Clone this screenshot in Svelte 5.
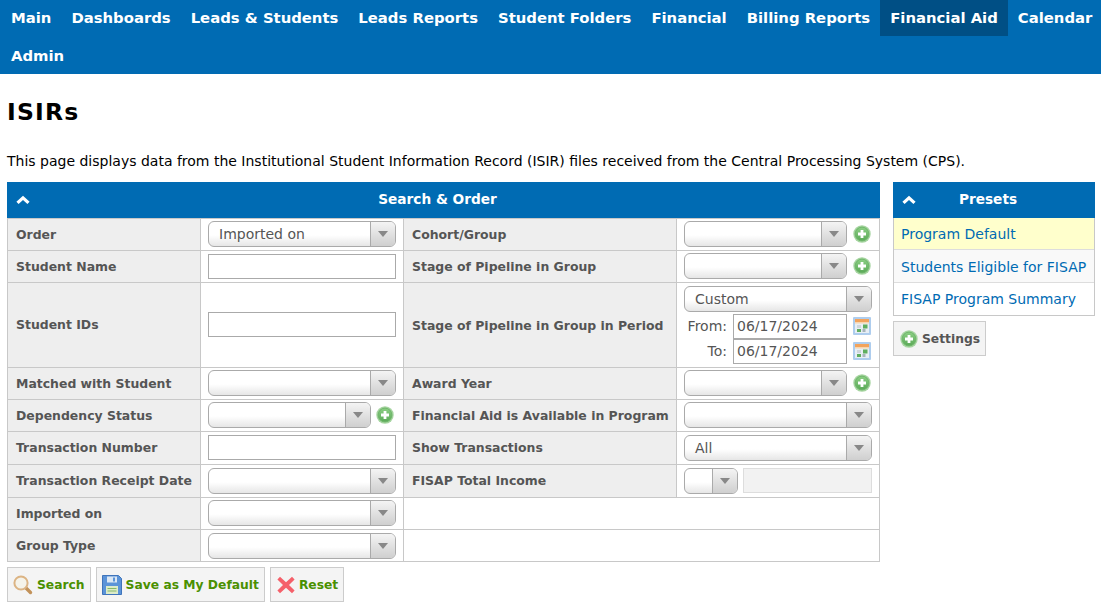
<script>
  const navRows = [
    ['Main','Dashboards','Leads & Students','Leads Reports','Student Folders','Financial','Billing Reports','Financial Aid','Calendar'],
    ['Admin']
  ];
  const presets = ['Program Default','Students Eligible for FISAP','FISAP Program Summary'];
</script>

{#snippet plus()}
  <svg class="plus" viewBox="0 0 18 18" width="18" height="18" aria-hidden="true">
    <defs><linearGradient id="pg" x1="0" y1="0" x2="0" y2="1"><stop offset="0" stop-color="#8ccf84"/><stop offset="1" stop-color="#5aa957"/></linearGradient></defs>
    <circle cx="9" cy="9" r="8.7" fill="#a5d49f"/>
    <circle cx="9" cy="9" r="6.9" fill="url(#pg)" stroke="#6fb66b" stroke-width="1"/>
    <path d="M7.6 5h2.8v2.6H13v2.8h-2.6V13H7.6v-2.6H5V7.6h2.6z" fill="#fff"/>
  </svg>
{/snippet}

{#snippet select(value, cls)}
  <div class="select {cls}"><span class="val">{value}</span><span class="arrow"><i></i></span></div>
{/snippet}

{#snippet selectPlus()}
  <div class="withplus">{@render select('', 'short')}{@render plus()}</div>
{/snippet}

{#snippet cal()}
  <svg class="cal" viewBox="0 0 18 18" width="18" height="18" aria-hidden="true">
    <rect width="18" height="18" rx="1" fill="#aecdee"/>
    <rect x="2" y="2" width="14" height="14" fill="#e8eff5"/>
    <rect x="2" y="2" width="14" height="3" fill="#f2a35c"/>
    <rect x="2" y="5" width="14" height="1.5" fill="#f7d6b0"/>
    <rect x="4" y="8" width="4" height="3" fill="#cfd6dc"/>
    <rect x="10" y="7.5" width="4.5" height="4" fill="#5fae5f"/>
    <rect x="4" y="12" width="4" height="3" fill="#5fae5f"/>
    <rect x="9.5" y="12" width="3" height="3" fill="#a8b4bc"/>
  </svg>
{/snippet}

{#snippet chevron()}
  <svg class="chev" viewBox="0 0 14 10" width="14" height="10" aria-hidden="true"><path d="M7 .8 13.6 6.8 11.4 9 7 5 2.6 9 .4 6.8z" fill="#fff"/></svg>
{/snippet}

<nav class="nav">
  {#each navRows as row}
    <div class="navrow">
      {#each row as item}
        <a class="navitem" class:active={item === 'Financial Aid'} href="#top">{item}</a>
      {/each}
    </div>
  {/each}
</nav>

<main class="page">
  <h1>ISIRs</h1>
  <p class="intro">This page displays data from the Institutional Student Information Record (ISIR) files received from the Central Processing System (CPS).</p>

  <div class="cols">
    <section class="left">
      <header class="bar">{@render chevron()}<span>Search &amp; Order</span></header>
      <table>
        <colgroup><col class="c1"/><col class="c2"/><col class="c3"/><col class="c4"/></colgroup>
        <tbody>
          <tr><th>Order</th><td>{@render select('Imported on', '')}</td><th>Cohort/Group</th><td>{@render selectPlus()}</td></tr>
          <tr><th>Student Name</th><td><div class="input"></div></td><th>Stage of Pipeline in Group</th><td>{@render selectPlus()}</td></tr>
          <tr class="tall">
            <th>Student IDs</th><td><div class="input"></div></td>
            <th>Stage of Pipeline in Group in Period</th>
            <td>
              {@render select('Custom', '')}
              <div class="date first"><label for="d1">From:</label><div id="d1" class="input dateinput">06/17/2024</div>{@render cal()}</div>
              <div class="date"><label for="d2">To:</label><div id="d2" class="input dateinput">06/17/2024</div>{@render cal()}</div>
            </td>
          </tr>
          <tr><th>Matched with Student</th><td>{@render select('', '')}</td><th>Award Year</th><td>{@render selectPlus()}</td></tr>
          <tr><th>Dependency Status</th><td><div class="withplus tight">{@render select('', 'short')}{@render plus()}</div></td><th>Financial Aid is Available in Program</th><td>{@render select('', '')}</td></tr>
          <tr class="mid"><th>Transaction Number</th><td class="inputcell"><div class="input"></div></td><th>Show Transactions</th><td>{@render select('All', '')}</td></tr>
          <tr class="mid"><th>Transaction Receipt Date</th><td>{@render select('', '')}</td><th>FISAP Total Income</th><td><div class="income">{@render select('', 'tiny')}<div class="disabled"></div></div></td></tr>
          <tr><th>Imported on</th><td>{@render select('', '')}</td><td class="blank" colspan="2"></td></tr>
          <tr class="last"><th>Group Type</th><td>{@render select('', '')}</td><td class="blank" colspan="2"></td></tr>
        </tbody>
      </table>
      <div class="actions">
        <button type="button">
          <svg viewBox="0 0 20 20" width="20" height="20" aria-hidden="true"><path d="M12.5 12.5 17.5 17.5" stroke="#c2925a" stroke-width="3.4" stroke-linecap="round"/><circle cx="8" cy="8" r="6.6" fill="#f5f3ea" stroke="#dcb484" stroke-width="2"/></svg>
          Search
        </button>
        <button type="button">
          <svg viewBox="0 0 20 20" width="20" height="20" aria-hidden="true"><path d="M.5.5h16l3 3v16H.5z" fill="#5b93d8" stroke="#3f74bb"/><rect x="5" y="1.5" width="10" height="6" fill="#dbe7f4"/><rect x="11" y="2.5" width="2" height="4" fill="#5b93d8"/><rect x="4" y="11" width="12" height="8" fill="#dcebc8"/><path d="M5.5 13.5h9M5.5 16h9" stroke="#86b868" stroke-width="1"/></svg>
          Save as My Default
        </button>
        <button type="button" class="reset">
          <svg viewBox="0 0 18 18" width="18" height="18" aria-hidden="true"><path d="M3 .8 9 6.3 15 .8 17.6 3.4 12 9l5.6 5.6-2.6 2.6L9 11.7l-6 5.5L.4 14.6 6 9 .4 3.4z" fill="#f5606a"/></svg>
          Reset
        </button>
      </div>
    </section>

    <aside class="right">
      <header class="bar">{@render chevron()}<span>Presets</span></header>
      <ul>
        {#each presets as p, i}
          <li class:sel={i === 0} class:alt={i === 1}><a href="#top">{p}</a></li>
        {/each}
      </ul>
      <button type="button" class="settings">{@render plus()}Settings</button>
    </aside>
  </div>
</main>

<style>
  :global(body) { margin: 0; background: #fff; font-family: "DejaVu Sans", Verdana, sans-serif; }
  .nav { background: #006bb3; padding: 0 1px; height: 74px; box-sizing: border-box; overflow: hidden; }
  .navrow { display: flex; height: 38px; white-space: nowrap; }
  .navitem { color: #fff; font-weight: 700; font-size: 14.83px; line-height: 36px; height: 36px; padding: 0 10px; text-decoration: none; flex: none; }
  .navitem.active { background: #004f85; }
  .page { padding: 0 7px; }
  h1 { margin: 0; padding-top: 24px; font-size: 23.5px; letter-spacing: 1.2px; line-height: 28px; font-weight: 700; color: #000; }
  .intro { margin: 0; padding-top: 26px; font-size: 14px; line-height: 18px; height: 30px; color: #000; white-space: nowrap; }
  .cols { display: flex; gap: 13px; align-items: flex-start; }
  .left { width: 873px; flex: none; }
  .right { width: 202px; flex: none; }
  .bar { position: relative; background: #006bb3; color: #fff; height: 36px; font-weight: 700; font-size: 13.7px; line-height: 34px; text-align: center; padding-right: 12px; box-sizing: border-box; }
  .chev { position: absolute; left: 9px; top: 13px; }
  table { border-collapse: collapse; table-layout: fixed; width: 872px; }
  .c1 { width: 193px; } .c2 { width: 203px; } .c3 { width: 273px; } .c4 { width: 203px; }
  th, td { border: 1px solid #c8c8c8; height: 31px; padding: 0 7px; box-sizing: border-box; font-size: 13px; }
  td { padding-bottom: 1px; background: #fff; }
  tr { height: 32px; }
  tr.tall { height: 85px; }
  tr.tall > td:nth-child(2) { padding-bottom: 2px; }
  tr.tall > th:first-child { padding-bottom: 2px; }
  tr.mid { height: 33px; }
  tr.mid > th { padding-bottom: 2px; }
  tr.mid > td { padding-bottom: 0; }
  tr.mid > td.inputcell { padding-bottom: 1px; }
  tr.last > td { padding-bottom: 0; }
  th { background: #eee; color: #555; text-align: left; font-weight: 700; padding-left: 8px; white-space: nowrap; font-size: 12.45px; }
  .select { display: flex; height: 26px; width: 188px; box-sizing: border-box; border: 1px solid #aaa; border-radius: 6px; background: linear-gradient(#fff 55%, #e6e6e6); overflow: hidden; color: #555; font-size: 14px; }
  .select.short { width: 163px; }
  .select.tiny { width: 54px; flex: none; }
  .val { flex: 1; padding-left: 10px; line-height: 24px; }
  .arrow { width: 24px; flex: none; display: flex; align-items: center; justify-content: center; border-left: 1px solid #aaa; background: linear-gradient(#f4f4f4, #cfcfcf); }
  .arrow i { width: 0; height: 0; border: 5px solid transparent; border-top: 6px solid #888; border-bottom: 0; }
  .input { width: 188px; height: 25px; box-sizing: border-box; border: 1px solid #aaa; background: #fff; }
  .withplus { display: flex; align-items: center; gap: 6px; }
  .withplus.tight { gap: 5px; }
  .plus { flex: none; }
  .date { display: flex; align-items: center; height: 25px; gap: 6px; color: #555; font-size: 14px; }
  .date.first { margin-top: 2px; }
  .date label { width: 43px; text-align: right; flex: none; }
  .dateinput { width: 114px; padding-left: 3px; line-height: 23px; flex: none; }
  .cal { flex: none; }
  .income { display: flex; gap: 5px; }
  .disabled { width: 129px; height: 25px; box-sizing: border-box; border: 1px solid #ddd; background: #f2f2f2; }
  .actions { display: flex; gap: 5px; margin-top: 5px; }
  button { display: flex; align-items: center; gap: 4px; height: 35px; box-sizing: border-box; border: 1px solid #ccc; background: #f4f4f4; color: #4a9000; font: 700 12.3px "DejaVu Sans", sans-serif; padding: 0 5px; }
  .reset svg { margin-left: 1px; }
  ul { list-style: none; margin: 0; padding: 0; border: 1px solid #c8c8c8; border-top: 0; }
  li { height: 33px; line-height: 34px; padding-left: 7px; font-size: 14px; box-sizing: border-box; border-bottom: 1px solid #ddd; white-space: nowrap; }
  li:first-child { height: 32px; line-height: 32px; }
  li:last-child { border-bottom: 0; height: 32px; line-height: 32px; }
  li.sel { background: #ffc; }
  li.alt { background: #f9f9f9; }
  li a { color: #006bb3; text-decoration: none; }
  .settings { margin-top: 5px; color: #555; padding: 0 6px; width: 93px; }
</style>
